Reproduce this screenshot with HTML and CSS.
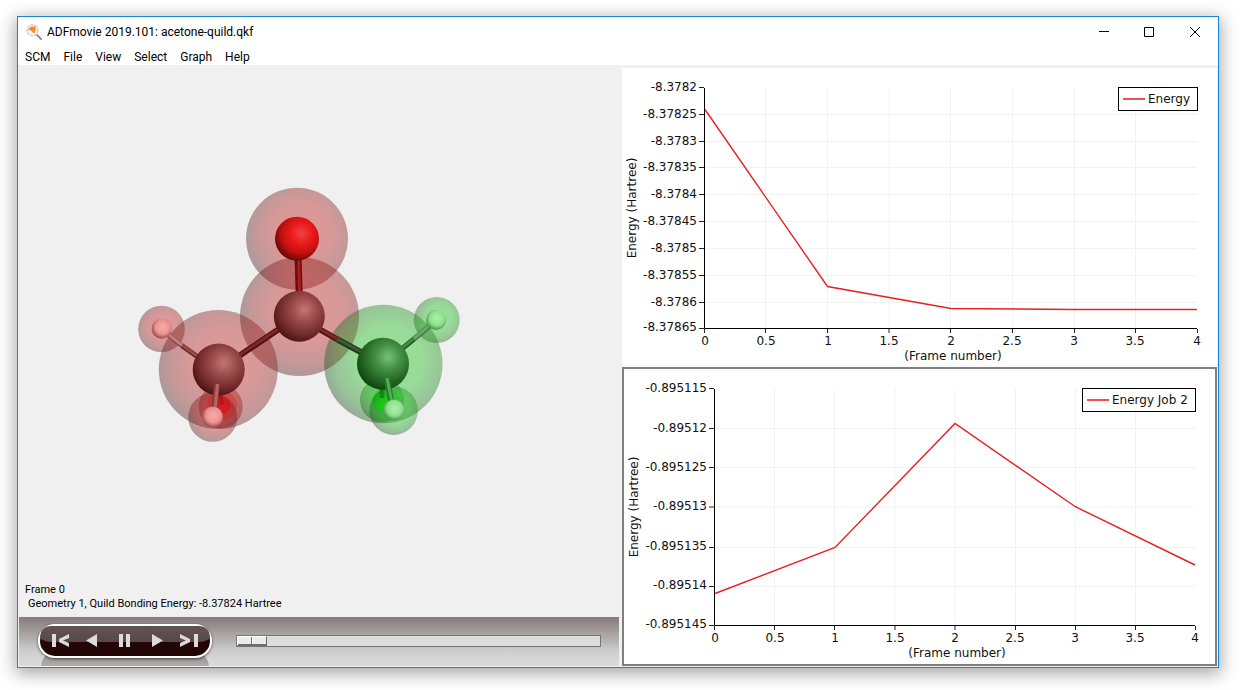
FILE: index.html
```html
<!DOCTYPE html>
<html lang="en">
<head>
<meta charset="utf-8">
<title>ADFmovie 2019.101: acetone-quild.qkf</title>
<link rel="stylesheet" href="styles.css">
</head>
<body>
<main class="window">
  <header class="titlebar">
    <svg class="app-icon" viewBox="0 0 16 16" aria-hidden="true">
      <path d="M10.5 10.5 15 15" stroke="#8f8f8f" stroke-width="2" stroke-linecap="round"/>
      <circle cx="6.5" cy="6.3" r="5.4" fill="#f7f5f3" stroke="#d3d3d3" stroke-width="1.6" stroke-dasharray="3 .8"/>
      <path d="M2 5.500 4 3.200 6 2.400 9.500 2.600 9.800 5.200 9 9 6.600 8.400 5 6.600Z" fill="#ff8a1f"/>
    </svg>
    <h1 class="title">ADFmovie 2019.101: acetone-quild.qkf</h1>
    <div class="window-buttons">
      <button class="window-button" type="button" aria-label="Minimize"><svg viewBox="0 0 12 12"><path d="M2 5.500H12"/></svg></button>
      <button class="window-button" type="button" aria-label="Maximize"><svg viewBox="0 0 12 12"><path d="M1.500 1.500H10.500V10.500H1.500Z"/></svg></button>
      <button class="window-button" type="button" aria-label="Close"><svg viewBox="0 0 12 12"><path d="M1 1 11 11M11 1 1 11"/></svg></button>
    </div>
  </header>
  <nav class="menubar">
    <button type="button">SCM</button>
    <button type="button">File</button>
    <button type="button">View</button>
    <button type="button">Select</button>
    <button type="button">Graph</button>
    <button type="button">Help</button>
  </nav>

  <div class="content">
    <section class="viewer">
      <div class="stage">
        <svg class="molecule" viewBox="19 68 600 549" role="img" aria-label="Acetone molecule">
          <defs>
            <radialGradient id="haloRed" cx=".55" cy=".46" r=".57">
              <stop offset="0" stop-color="#c81a1a" stop-opacity=".41"/>
              <stop offset=".5" stop-color="#b81a1a" stop-opacity=".41"/>
              <stop offset=".8" stop-color="#841a1a" stop-opacity=".41"/>
              <stop offset="1" stop-color="#401c1c" stop-opacity=".41"/>
            </radialGradient>
            <radialGradient id="haloGreen" cx=".55" cy=".46" r=".57">
              <stop offset="0" stop-color="#1ac81a" stop-opacity=".41"/>
              <stop offset=".5" stop-color="#1abc1a" stop-opacity=".41"/>
              <stop offset=".8" stop-color="#1a841a" stop-opacity=".41"/>
              <stop offset="1" stop-color="#1c401c" stop-opacity=".41"/>
            </radialGradient>
            <radialGradient id="oxygen" cx=".6" cy=".38" r=".66">
              <stop offset="0" stop-color="#ef4242"/>
              <stop offset=".4" stop-color="#ea1818"/>
              <stop offset=".7" stop-color="#be1010"/>
              <stop offset="1" stop-color="#5c0707"/>
            </radialGradient>
            <radialGradient id="carbonRed" cx=".6" cy=".37" r=".68">
              <stop offset="0" stop-color="#c47676"/>
              <stop offset=".35" stop-color="#9c4c4c"/>
              <stop offset=".7" stop-color="#742c2c"/>
              <stop offset="1" stop-color="#481010"/>
            </radialGradient>
            <radialGradient id="carbonGreen" cx=".6" cy=".37" r=".68">
              <stop offset="0" stop-color="#78c078"/>
              <stop offset=".35" stop-color="#469046"/>
              <stop offset=".7" stop-color="#236623"/>
              <stop offset="1" stop-color="#0c400c"/>
            </radialGradient>
            <radialGradient id="hydrogenRed" cx=".55" cy=".42" r=".6">
              <stop offset="0" stop-color="#fbaaaa"/>
              <stop offset=".6" stop-color="#ea9292"/>
              <stop offset="1" stop-color="#8c4444"/>
            </radialGradient>
            <radialGradient id="hydrogenGreen" cx=".55" cy=".42" r=".6">
              <stop offset="0" stop-color="#a8f4a8"/>
              <stop offset=".6" stop-color="#90e090"/>
              <stop offset="1" stop-color="#448844"/>
            </radialGradient>
          </defs>

          <circle cx="220.700" cy="406.500" r="22" fill="url(#haloRed)"/>
          <circle cx="382" cy="400" r="22" fill="url(#haloGreen)"/>
          <circle cx="297" cy="238.700" r="51" fill="url(#haloRed)"/>
          <circle cx="161.500" cy="329" r="23.300" fill="url(#haloRed)"/>
          <circle cx="436.700" cy="320" r="23" fill="url(#haloGreen)"/>
          <circle cx="299.500" cy="316.500" r="59.500" fill="url(#haloRed)"/>
          <circle cx="218.300" cy="369.500" r="59.500" fill="url(#haloRed)"/>
          <circle cx="383.300" cy="364" r="59.200" fill="url(#haloGreen)"/>
          <circle cx="222" cy="405.700" r="8.500" fill="#f02424"/>
          <circle cx="381.700" cy="400.700" r="9" fill="#20e020"/>
          <g class="bonds">
            <path d="M219 390 222 405" stroke="#b01010" stroke-width="5"/>
            <path d="M382 388 382 398" stroke="#087808" stroke-width="5"/>
          </g>
          <circle cx="222" cy="405.700" r="15" fill="#d01414" opacity=".3"/>
          <circle cx="386" cy="402" r="14" fill="#10b010" opacity=".3"/>
          <circle cx="212.700" cy="417.300" r="24.500" fill="url(#haloRed)"/>
          <circle cx="393.700" cy="410.700" r="24.200" fill="url(#haloGreen)"/>

          <g class="bonds">
            <path d="M298 255 299.200 295" stroke="#6c0c0c" stroke-width="7"/>
            <path d="M298.500 255 299.700 295" stroke="#a81c1c" stroke-width="3"/>
            <path d="M285 325 230 362" stroke="#4c1010" stroke-width="6"/>
            <path d="M285 324.500 230 361.500" stroke="#7c2828" stroke-width="3"/>
            <path d="M312 325 337.500 339.500" stroke="#501212" stroke-width="6"/>
            <path d="M312 324.500 337.500 339" stroke="#802a2a" stroke-width="3"/>
            <path d="M337.500 339.500 368 356" stroke="#203c18" stroke-width="6"/>
            <path d="M337.500 339 368 355.500" stroke="#405c30" stroke-width="3"/>
            <path d="M205 362 182 345.700" stroke="#602020" stroke-width="5"/>
            <path d="M205 361.500 182 345.200" stroke="#964a4a" stroke-width="3"/>
            <path d="M182 345.700 166 333" stroke="#904848" stroke-width="5"/>
            <path d="M182 345.200 166 332.500" stroke="#c08080" stroke-width="3"/>
            <path d="M398 352 414 339" stroke="#185018" stroke-width="5"/>
            <path d="M398 351.500 414 338.500" stroke="#408840" stroke-width="3"/>
            <path d="M414 339 432 324" stroke="#40783f" stroke-width="5"/>
            <path d="M414 338.500 432 323.500" stroke="#68a868" stroke-width="3"/>
          </g>
          <circle cx="297" cy="238.700" r="22" fill="url(#oxygen)"/>
          <circle cx="299.300" cy="316.300" r="25.500" fill="url(#carbonRed)"/>
          <circle cx="218.700" cy="369.500" r="26" fill="url(#carbonRed)"/>
          <circle cx="383" cy="363.800" r="26" fill="url(#carbonGreen)"/>
          <circle cx="161.700" cy="328.700" r="10" fill="url(#hydrogenRed)"/>
          <circle cx="436" cy="320" r="10" fill="url(#hydrogenGreen)"/>
          <g class="bonds">
            <path d="M217 384 214.500 410" stroke="#8c3838" stroke-width="6"/>
            <path d="M217.500 384 215 410" stroke="#b46666" stroke-width="3"/>
            <path d="M386.500 378 391.500 403" stroke="#287428" stroke-width="6"/>
            <path d="M387 378 392 403" stroke="#55aa55" stroke-width="3"/>
          </g>
          <circle cx="212.500" cy="417" r="10.500" fill="url(#hydrogenRed)"/>
          <circle cx="393.700" cy="410" r="10.500" fill="url(#hydrogenGreen)"/>
        </svg>
        <div class="caption">
          <p>Frame 0</p>
          <p class="caption-detail">Geometry 1, Quild Bonding Energy: -8.37824 Hartree</p>
        </div>
      </div>

      <div class="player">
        <div class="transport">
          <button type="button" aria-label="First frame"><svg viewBox="0 0 20 16"><path d="M1 1H5V14H1ZM18 1V5L12 7.500 18 10V14L8 9V6Z"/></svg></button>
          <button type="button" aria-label="Play backward"><svg viewBox="0 0 20 16"><path d="M14 1V14L3 7.500Z"/></svg></button>
          <button type="button" aria-label="Pause"><svg viewBox="0 0 20 16"><path d="M4 1H8V14H4ZM11 1H15V14H11Z"/></svg></button>
          <button type="button" aria-label="Play"><svg viewBox="0 0 20 16"><path d="M6 1V14L17 7.500Z"/></svg></button>
          <button type="button" aria-label="Last frame"><svg viewBox="0 0 20 16"><path d="M16 1H20V14H16ZM2 1V5L8 7.500 2 10V14L12 9V6Z"/></svg></button>
        </div>
        <input class="frame-slider" type="range" min="0" max="4" value="0" aria-label="Frame">
      </div>
    </section>

    <section class="graphs">
      <div class="graph">
        <svg class="chart" viewBox="622 68 595 299" role="img" aria-label="Energy per frame">
          <path class="grid" d="M704 114.500H1197M704 141.500H1197M704 167.500H1197M704 194.500H1197M704 221.500H1197M704 248.500H1197M704 275.500H1197M704 302.500H1197M765.500 88V328M827.500 88V328M889 88V328M950.500 88V328M1012.500 88V328M1074.500 88V328M1135.500 88V328"/>
          <path class="axis" d="M704.500 88V328.500H1197"/>
          <path class="tick" d="M699 87.500H704M699 114.500H704M699 141.500H704M699 167.500H704M699 194.500H704M699 221.500H704M699 248.500H704M699 275.500H704M699 302.500H704M699 328.500H704M704.500 329V333M765.500 329V333M827.500 329V333M889 329V333M950.500 329V333M1012.500 329V333M1074.500 329V333M1135.500 329V333M1197.500 329V333"/>
          <polyline class="series" points="705,109.500 827.500,286.500 951,308.500 1074,309.500 1197,309.500"/>
          <g class="labels-y">
            <text x="697" y="91">-8.3782</text>
            <text x="697" y="118">-8.37825</text>
            <text x="697" y="145">-8.3783</text>
            <text x="697" y="171">-8.37835</text>
            <text x="697" y="198">-8.3784</text>
            <text x="697" y="225">-8.37845</text>
            <text x="697" y="252">-8.3785</text>
            <text x="697" y="279">-8.37855</text>
            <text x="697" y="306">-8.3786</text>
            <text x="697" y="331">-8.37865</text>
          </g>
          <g class="labels-x">
            <text x="705" y="345">0</text>
            <text x="766" y="345">0.5</text>
            <text x="828" y="345">1</text>
            <text x="889" y="345">1.5</text>
            <text x="951" y="345">2</text>
            <text x="1012" y="345">2.5</text>
            <text x="1074" y="345">3</text>
            <text x="1135" y="345">3.5</text>
            <text x="1197" y="345">4</text>
            <text x="953" y="360">(Frame number)</text>
            <text transform="translate(636 208) rotate(-90)">Energy (Hartree)</text>
          </g>
          <rect class="legend-box" x="1118.500" y="87.500" width="79" height="23"/>
          <path class="legend-line" d="M1123 99H1145"/>
          <text class="legend-text" x="1148" y="103">Energy</text>
        </svg>
      </div>

      <div class="graph graph-active">
        <svg class="chart" viewBox="624 369 591 295" role="img" aria-label="Energy Job 2 per frame">
          <path class="grid" d="M715 428.500H1195M715 467.500H1195M715 507H1195M715 547.500H1195M715 586.500H1195M774.500 389V625M834.500 389V625M895 389V625M955 389V625M1015.500 389V625M1075.500 389V625M1135.500 389V625"/>
          <path class="axis" d="M714.500 389V625.500H1195"/>
          <path class="tick" d="M709 388.500H714M709 428.500H714M709 467.500H714M709 507H714M709 547.500H714M709 586.500H714M709 625.500H714M714.500 626V630M774.500 626V630M834.500 626V630M895 626V630M955 626V630M1015.500 626V630M1075.500 626V630M1135.500 626V630M1195.500 626V630"/>
          <polyline class="series" points="715,593.500 835,547.500 955,423.500 1075,506.500 1195,565"/>
          <g class="labels-y">
            <text x="707" y="392">-0.895115</text>
            <text x="707" y="432">-0.89512</text>
            <text x="707" y="471">-0.895125</text>
            <text x="707" y="510">-0.89513</text>
            <text x="707" y="550">-0.895135</text>
            <text x="707" y="589">-0.89514</text>
            <text x="707" y="628">-0.895145</text>
          </g>
          <g class="labels-x">
            <text x="715" y="642">0</text>
            <text x="775" y="642">0.5</text>
            <text x="835" y="642">1</text>
            <text x="895" y="642">1.5</text>
            <text x="955" y="642">2</text>
            <text x="1015" y="642">2.5</text>
            <text x="1075" y="642">3</text>
            <text x="1135" y="642">3.5</text>
            <text x="1195" y="642">4</text>
            <text x="957" y="657">(Frame number)</text>
            <text transform="translate(638 507) rotate(-90)">Energy (Hartree)</text>
          </g>
          <rect class="legend-box" x="1082.500" y="388.500" width="113" height="23"/>
          <path class="legend-line" d="M1087 400H1109"/>
          <text class="legend-text" x="1112" y="404">Energy Job 2</text>
        </svg>
      </div>
    </section>
  </div>
</main>
</body>
</html>
```

FILE: styles.css
```css
* { box-sizing: border-box; }

body {
  margin: 0;
  min-height: 100vh;
  display: flex;
  padding: 16px 21px 22px 17px;
  background: #fff;
  color: #000;
  font: 12px/18px Roboto, "Open Sans", sans-serif;
}

button {
  margin: 0;
  padding: 0;
  border: 0;
  background: none;
  color: inherit;
  font: inherit;
}

.window {
  flex: 1;
  min-width: 0;
  display: flex;
  flex-direction: column;
  border: 1px solid #1883d7;
  background: #fff;
  box-shadow: 0 4px 16px 2px rgba(0, 0, 0, .34);
}

.titlebar {
  display: flex;
  align-items: center;
  height: 30px;
  padding-left: 8px;
}

.app-icon { width: 16px; height: 16px; }

.title {
  flex: 1;
  margin: 0 0 0 5px;
  font-size: 12px;
  font-weight: 400;
}

.window-buttons { display: flex; }

.window-button {
  display: grid;
  place-items: center;
  width: 46px;
  height: 29px;
}

.window-button svg {
  width: 12px;
  height: 12px;
  fill: none;
  stroke: #000;
}

.menubar {
  display: flex;
  gap: 13px;
  height: 18px;
  padding-left: 7px;
  line-height: 20px;
}

.menubar button { height: 20px; }

.content {
  flex: 1;
  display: grid;
  grid-template-columns: 600fr 595fr;
  gap: 3px;
  padding: 3px 1px 1px;
  background: #f0f0f0;
}

.viewer {
  min-width: 0;
  display: flex;
  flex-direction: column;
}

.stage {
  flex: 1;
  display: grid;
  background: #f0f0f0;
}

.molecule,
.caption { grid-area: 1 / 1; }

.molecule { width: 100%; height: 100%; }

.caption {
  align-self: end;
  padding: 0 6px 6px;
  font-size: 11px;
  line-height: 14px;
}

.caption p { margin: 0; }
.caption .caption-detail { padding-left: 3px; }

.player {
  display: flex;
  align-items: flex-start;
  gap: 24px;
  height: 49px;
  padding: 7px 18px 0 19px;
  overflow: hidden;
  isolation: isolate;
  background: linear-gradient(#857a7a, #b4afaf 45%, #cfcece 70%, #dcdcdc);
}

.transport {
  position: relative;
  display: flex;
  align-items: center;
  justify-content: space-between;
  width: 174px;
  height: 34px;
  padding: 0 12px 0 11px;
  border: 2px solid #fff;
  border-radius: 17px;
  background: linear-gradient(#240606 50%, #200404);
  box-shadow: 0 1px 3px rgba(0, 0, 0, .6);
}

/* Glossy upper half of the button bar. */
.transport::before {
  content: "";
  position: absolute;
  inset: 0 0 auto;
  height: 16px;
  border-radius: 15px 15px 16px 16px / 15px 15px 8px 8px;
  background: linear-gradient(#625252, #5a4848);
}

/* Reflection below the button bar. */
.transport::after {
  content: "";
  position: absolute;
  z-index: -1;
  top: 24px;
  left: 0;
  right: 0;
  height: 34px;
  border: 1px solid #e0dede;
  border-radius: 17px;
  background: linear-gradient(#a09a9a 20%, #b4b2b2 50%);
}

.transport button {
  position: relative;
  width: 20px;
  height: 16px;
}

.transport svg {
  display: block;
  width: 20px;
  height: 16px;
  fill: #dcdada;
}

.frame-slider {
  flex: 1;
  appearance: none;
  min-width: 0;
  height: 12px;
  margin: 11px 0 0;
  border: 1px solid #777;
  background: #dcdcdc;
}

.frame-slider::-webkit-slider-thumb {
  appearance: none;
  width: 30px;
  height: 10px;
  border: 1px solid;
  border-color: #fff #6c6c6c #6c6c6c #fff;
  background: linear-gradient(90deg, #ececec 13px, #707070 13px, #707070 14px, #fff 14px, #fff 15px, #ececec 15px);
  box-shadow: inset 0 -1px #6c6c6c;
}

.graphs {
  min-width: 0;
  display: grid;
  grid-template-rows: 1fr 1fr;
}

.graph { background: #fff; }
.graph-active { border: 2px solid #808080; }

.chart {
  display: block;
  width: 100%;
  height: 100%;
  font: 12px "DejaVu Sans", sans-serif;
  fill: #111;
}

.grid, .axis, .tick, .series, .legend-line { fill: none; }
.grid { stroke: #f2f2f2; }
.axis { stroke: #000; }
.tick { stroke: #222; }
.series { stroke: #e82020; stroke-width: 1.4px; }
.labels-y { text-anchor: end; }
.labels-x { text-anchor: middle; }
.legend-box { fill: #fff; stroke: #000; }
.legend-line { stroke: #f05050; stroke-width: 2px; }

.bonds { fill: none; }
```
